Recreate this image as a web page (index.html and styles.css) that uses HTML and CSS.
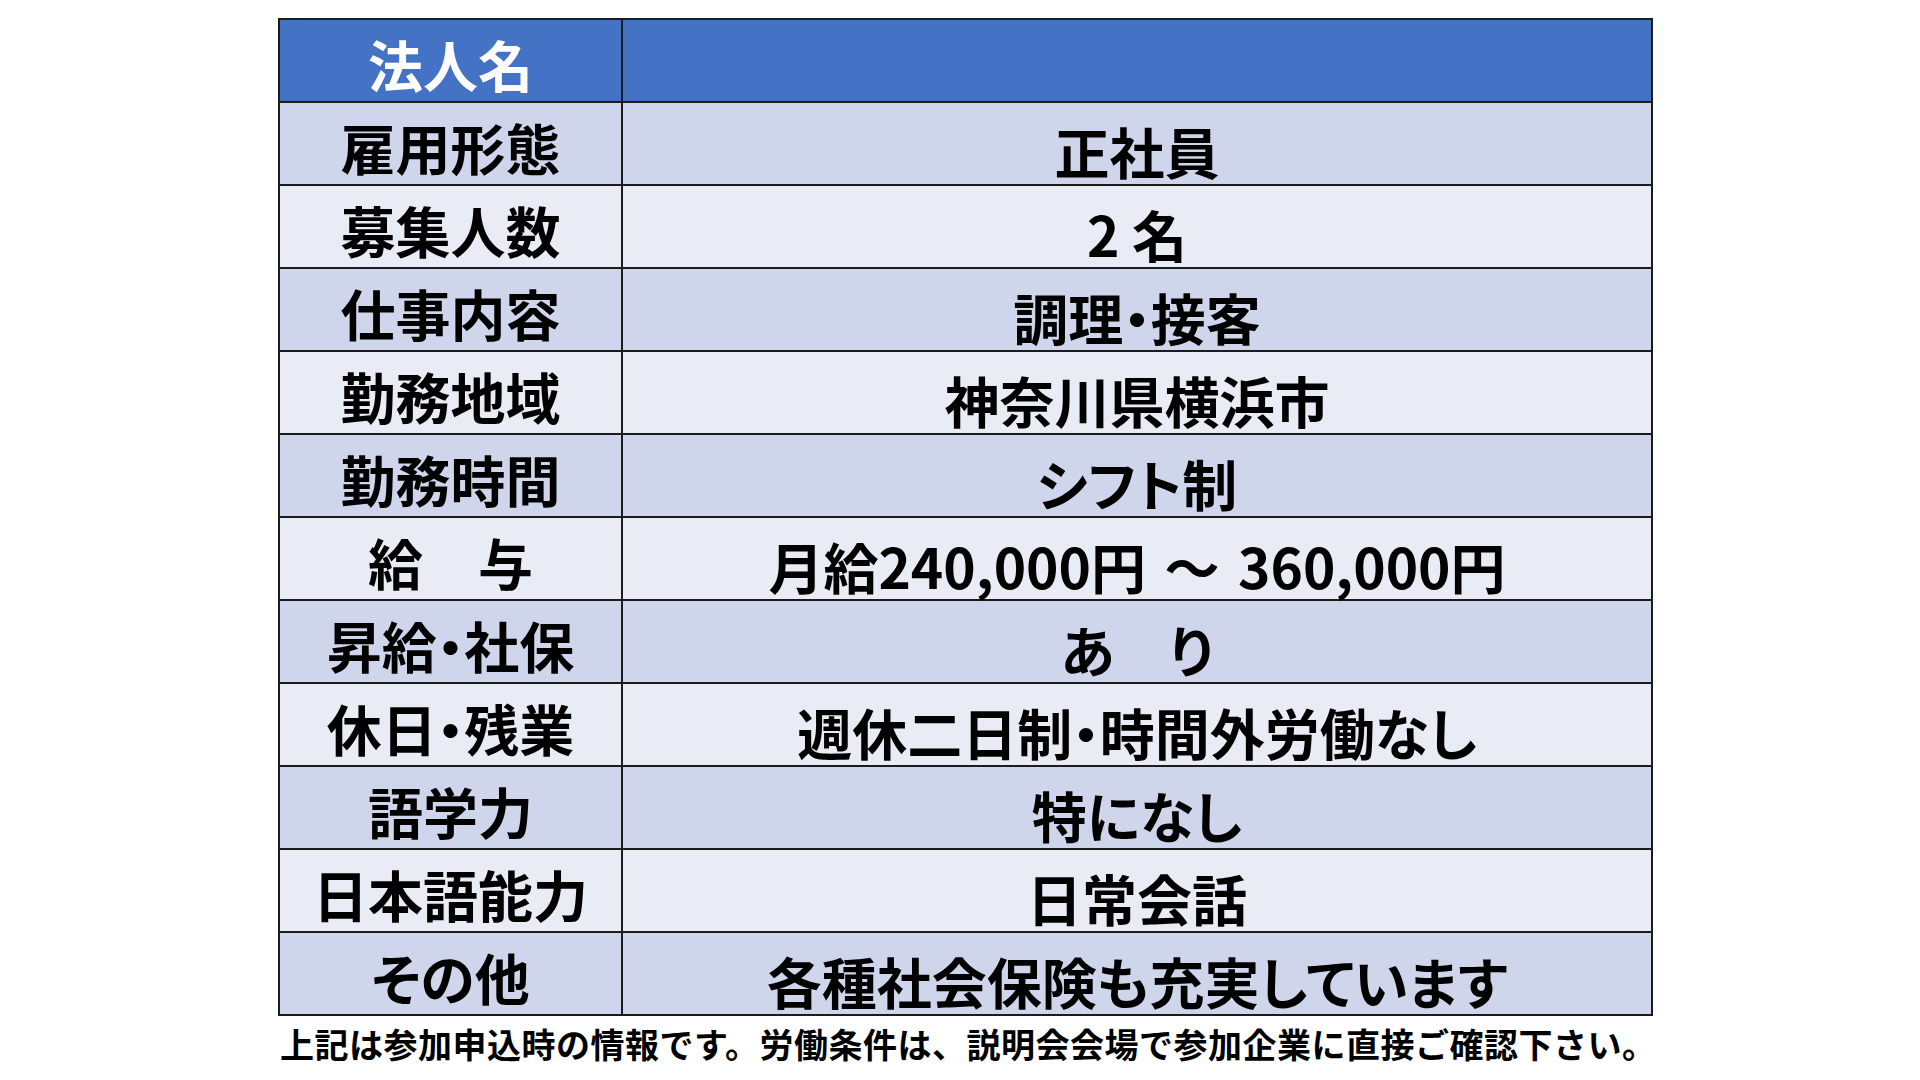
FILE: index.html
```html
<!DOCTYPE html>
<html lang="ja">
<head>
<meta charset="utf-8">
<title>求人情報</title>
<link rel="stylesheet" href="styles.css">
</head>
<body>
<main class="sheet">
  <table class="info">
    <tr class="head"><th>法人名</th><td></td></tr>
    <tr class="dark"><th>雇用形態</th><td>正社員</td></tr>
    <tr class="light"><th>募集人数</th><td>2 名</td></tr>
    <tr class="dark"><th>仕事内容</th><td>調理・接客</td></tr>
    <tr class="light"><th>勤務地域</th><td>神奈川県横浜市</td></tr>
    <tr class="dark"><th>勤務時間</th><td>シフト制</td></tr>
    <tr class="light"><th>給　与</th><td>月給240,000円 <span class="wave">～</span> 360,000円</td></tr>
    <tr class="dark"><th>昇給・社保</th><td>あ　り</td></tr>
    <tr class="light"><th>休日・残業</th><td>週休二日制・時間外労働なし</td></tr>
    <tr class="dark"><th>語学力</th><td>特になし</td></tr>
    <tr class="light"><th>日本語能力</th><td>日常会話</td></tr>
    <tr class="dark"><th>その他</th><td>各種社会保険も充実しています</td></tr>
  </table>
  <p class="note">上記は参加申込時の情報です。労働条件は、説明会会場で参加企業に直接ご確認下さい。</p>
</main>
</body>
</html>
```
FILE: styles.css
```css
html, body {
  margin: 0;
  padding: 0;
  background: #ffffff;
}
body {
  width: 1920px;
  height: 1080px;
  overflow: hidden;
  font-family: "Noto Sans CJK JP", "Noto Sans", sans-serif;
  font-weight: 700;
  color: #000;
}
.sheet {
  padding: 18px 0 0 278px;
}
.info {
  border-collapse: collapse;
  width: 1375px;
  border: 2px solid #1c1c1c;
}
.info th, .info td {
  border: 2px solid #1c1c1c;
  height: 77px;
  padding: 4px 0 0 0;
  text-align: center;
  vertical-align: middle;
  font-size: 55px;
  font-weight: 700;
  line-height: 60px;
  white-space: nowrap;
  font-feature-settings: "palt";
}
.info th {
  width: 341px;
}
.info td {
  padding-top: 12px;
  height: 69px;
}
.wave {
  margin: 0 6px;
}
.head th, .head td {
  background: #4472c4;
  color: #ffffff;
}
.dark th, .dark td {
  background: #cfd5ea;
}
.light th, .light td {
  background: #e9ebf5;
}
.note {
  margin: 8px 0 0 2px;
  font-size: 34px;
  line-height: 40px;
  font-weight: 700;
  letter-spacing: 0.5px;
  white-space: nowrap;
}
```
